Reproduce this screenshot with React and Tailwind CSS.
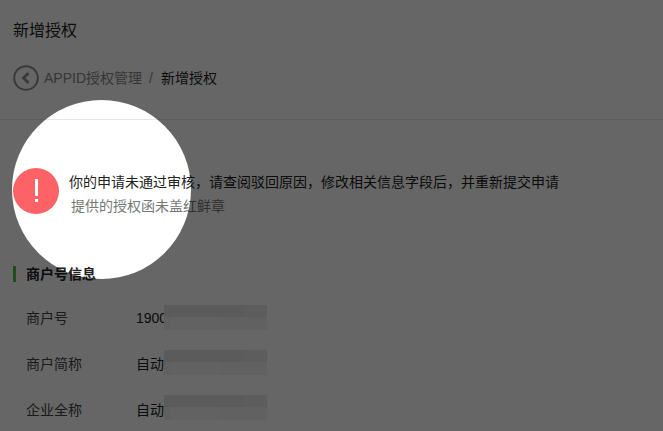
import React from 'react'

const font = { fontFamily: '"Liberation Sans", "Noto Sans CJK SC", sans-serif' }

const BlurPatch = ({ className }) => (
  <div className={`relative w-[103px] h-[25px] flex flex-col shrink-0 ${className}`}>
    <div className='h-[12px] flex'>
      <div className='w-[80px] bg-[#e4e4e4]'></div>
      <div className='w-[23px] bg-[#e8e8e8]'></div>
    </div>
    <div className='h-[13px] flex'>
      <div className='w-[7px] bg-[#f0f0f0]'></div>
      <div className='w-[48px] bg-[#f6f6f6]'></div>
      <div className='w-[48px] bg-[#f2f2f2]'></div>
    </div>
  </div>
)

const InfoRow = ({ label, value, patchClass }) => (
  <div className='flex items-start h-[25px] mb-[21px] text-[14px] leading-[26px]'>
    <span className='w-[110px] text-[#444]'>{label}</span>
    <span className='w-[28px] whitespace-nowrap text-[#222]'>{value}</span>
    <BlurPatch className={patchClass} />
  </div>
)

const App = () => {
  return (
    <div className='relative w-[663px] h-[431px] overflow-hidden bg-white' style={font}>
      <div className='px-[13px] pt-[21px] h-[120px] border-b border-[#e7e7e7]'>
        <h1 className='text-[16px] leading-[20px] font-normal text-[#222]'>新增授权</h1>
        <div className='flex items-center mt-[24px] h-[26px] text-[14px]'>
          <svg width='26' height='26' viewBox='0 0 26 26' fill='none'>
            <circle cx='13' cy='13' r='11.8' stroke='#8f8f8f' strokeWidth='2' />
            <path d='M15.5 8 L10.5 13 L15.5 18' stroke='#8f8f8f' strokeWidth='2.8' />
          </svg>
          <span className='ml-[5px] text-[#888]'>APPID授权管理</span>
          <span className='ml-[7px] mr-[8px] text-[#888]'>/</span>
          <span className='text-[#222]'>新增授权</span>
        </div>
      </div>

      <div className='flex pl-[13px] pt-[48px]'>
        <div className='relative w-[46px] h-[46px] rounded-full bg-[#fc6266] shrink-0'>
          <div className='absolute left-[22px] top-[11px] w-[3px] h-[17px] bg-white'></div>
          <div className='absolute left-[22px] top-[31px] w-[3px] h-[3px] bg-white'></div>
        </div>
        <div className='ml-[10px] mt-[2px] text-[14px] leading-[24px]'>
          <p className='text-[#222]'>你的申请未通过审核，请查阅驳回原因，修改相关信息字段后，并重新提交申请</p>
          <p className='ml-[2px] text-[#777]'>提供的授权函未盖红鲜章</p>
        </div>
      </div>

      <div className='px-[13px] mt-[48px]'>
        <div className='border-l-[3px] border-[#55c050] pl-[10px] h-[16px] flex items-center text-[14px] font-bold text-[#222]'>
          商户号信息
        </div>
        <div className='pl-[13px] mt-[23px]'>
          <InfoRow label='商户号' value='1900' patchClass='mt-0' />
          <InfoRow label='商户简称' value='自动' patchClass='-mt-[1px]' />
          <InfoRow label='企业全称' value='自动' patchClass='-mt-[2px]' />
        </div>
      </div>

      {/* spotlight mask */}
      <div className='absolute left-[12px] top-[100px] w-[179px] h-[179px] rounded-full shadow-[0_0_0_800px_rgba(0,0,0,0.6)]'></div>
    </div>
  )
}

export default App
